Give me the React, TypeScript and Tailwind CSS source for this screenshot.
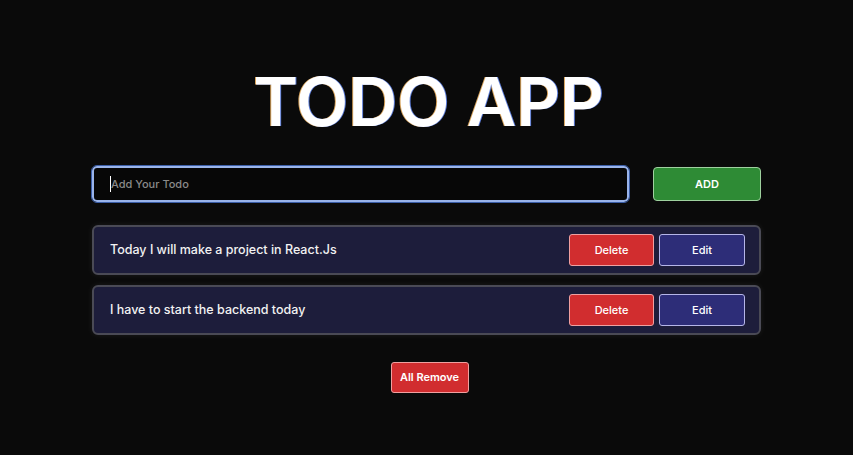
import React from "react";

const todos = ["Today I will make a project in React.Js", "I have to start the backend today"];

export default function App() {
  return (
    <div className="min-h-[455px] w-full bg-[#0a0a0a] text-white" style={{ fontFamily: "Inter, 'Noto Sans', sans-serif" }}>
      <div className="mx-auto flex w-[669px] flex-col items-center pt-[56px]">
        <h1 className="ml-[4px] text-[68px] font-semibold leading-[90px] tracking-[0px] [text-shadow:1px_0_0_#5b7bd6,-1px_0_0_#d6a25b]">TODO APP</h1>
        <div className="mt-[20px] flex w-full items-center gap-[24px]">
          <div className="flex h-[36px] flex-1 items-center rounded-[5px] border-2 border-[#9ab4ea] bg-[#070707] px-[16px] outline outline-1 outline-[#3b5ea8]">
            <span className="h-[16px] w-px bg-white" />
            <span className="text-[11px] font-medium text-[#8a8a8a]">Add Your Todo</span>
          </div>
          <button className="h-[34px] w-[108px] rounded-[4px] border border-[#9fd19f] bg-[#2e8b35] text-[11px] font-semibold text-white">ADD</button>
        </div>
        <div className="mt-[23px] flex w-full flex-col gap-[10px]">
          {todos.map((t) => (
            <div key={t} className="flex h-[50px] items-center justify-between rounded-[6px] border-2 border-[#4a4a55] bg-[#1d1d3b] pl-[16px] pr-[14px] shadow-[0_0_6px_rgba(255,255,255,0.08)]">
              <span className="text-[12.5px] font-medium text-[#f2f2f2]">{t}</span>
              <div className="flex gap-[5px]">
                <button className="h-[32px] w-[85px] rounded-[3px] border border-[#f0a0a0] bg-[#d12d2f] text-[11px] font-medium text-white">Delete</button>
                <button className="h-[32px] w-[86px] rounded-[3px] border border-[#b5b5e8] bg-[#2d2d78] text-[11px] font-medium text-white">Edit</button>
              </div>
            </div>
          ))}
        </div>
        <button className="ml-[6px] mt-[27px] h-[31px] w-[78px] rounded-[3px] border border-[#f0a0a0] bg-[#d12d2f] text-[11px] font-semibold text-white">All Remove</button>
      </div>
    </div>
  );
}
